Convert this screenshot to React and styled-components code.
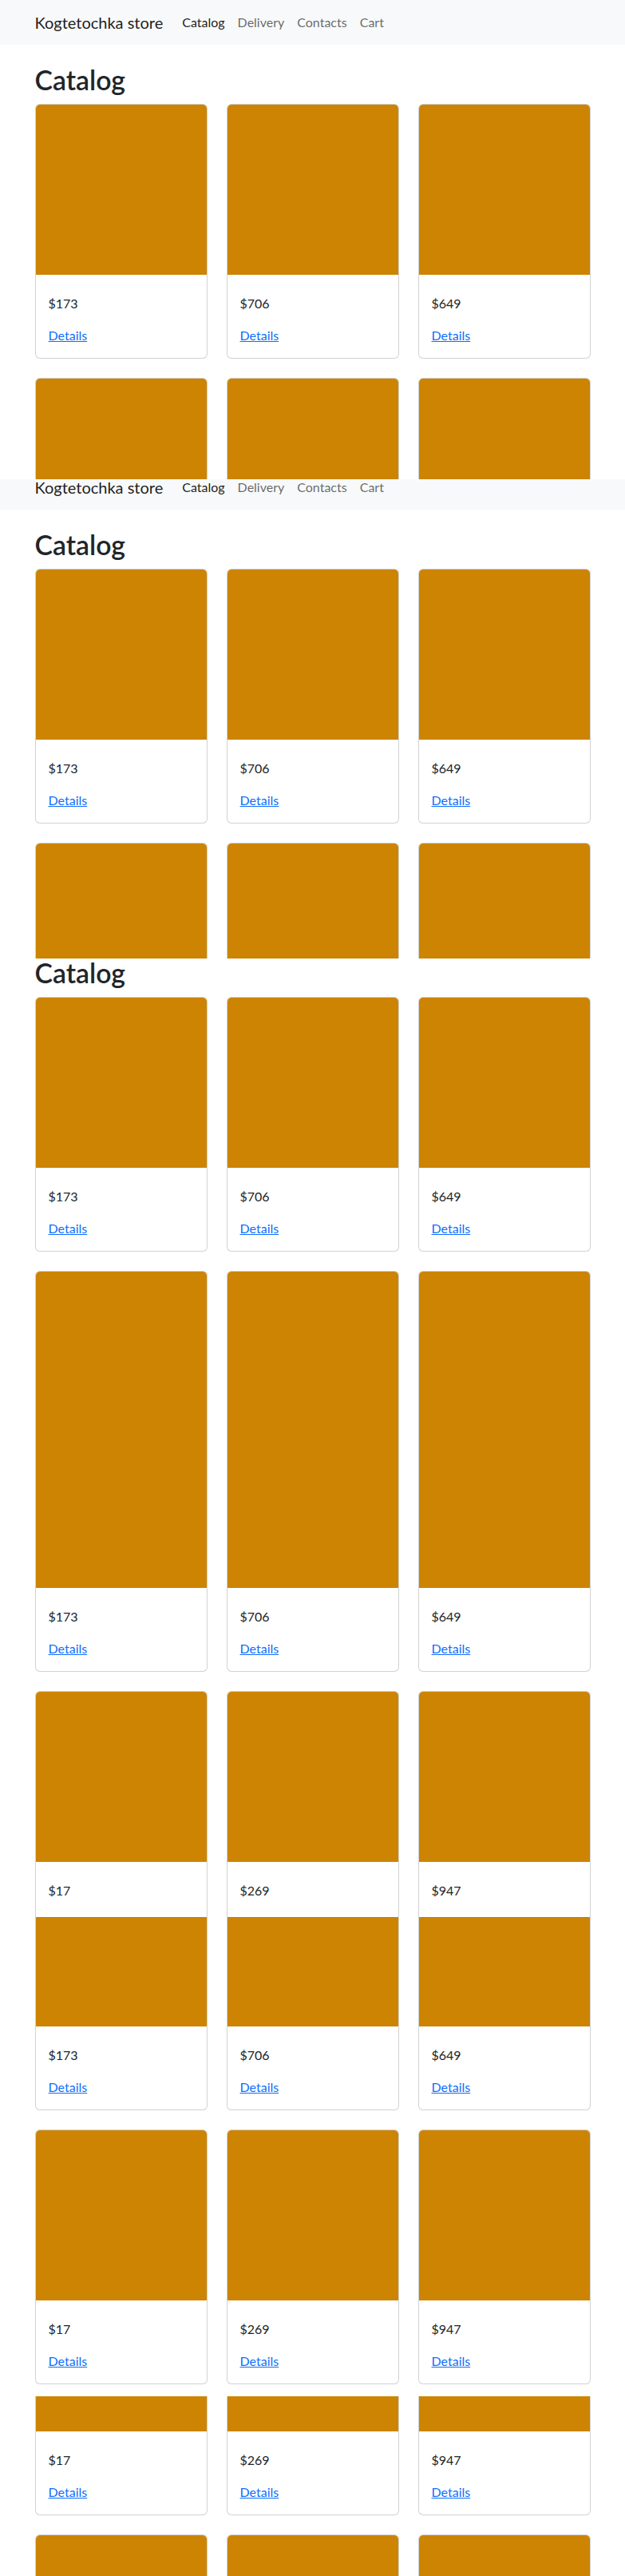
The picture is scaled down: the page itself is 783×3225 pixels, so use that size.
import styled, { createGlobalStyle } from "styled-components";

const GlobalStyle = createGlobalStyle`
  * {
    box-sizing: border-box;
  }

  body {
    margin: 0;
    background: #ffffff;
    color: #212529;
    font-family: "Segoe UI", Lato, "Liberation Sans", sans-serif;
    font-size: 16px;
    line-height: 1.5;
  }
`;

// the capture is several scroll positions of the same page stitched together,
// each slice shows the page from `from` and only needs the first `items` cards
const slices = [
  { from: 0, height: 600, items: 6 },
  { from: 18, height: 600, items: 6 },
  { from: 82, height: 590, items: 6 },
  { from: 146, height: 610, items: 6 },
  { from: 207, height: 600, items: 6 },
  { from: 643, height: 225, items: 9 },
];

const products = [
  { id: 1, price: 173 },
  { id: 2, price: 706 },
  { id: 3, price: 649 },
  { id: 4, price: 17 },
  { id: 5, price: 269 },
  { id: 6, price: 947 },
  { id: 7, price: 512 },
  { id: 8, price: 88 },
  { id: 9, price: 334 },
];

const navItems = ["Catalog", "Delivery", "Contacts", "Cart"];

function StorePage({ items }) {
  return (
    <>
      <Navbar>
        <NavContainer>
          <Brand href="#">Kogtetochka store</Brand>
          <NavList>
            {navItems.map((item) => (
              <NavLink key={item} href="#" $active={item === "Catalog"}>
                {item}
              </NavLink>
            ))}
          </NavList>
        </NavContainer>
      </Navbar>

      <Main>
        <Title>Catalog</Title>
        <Grid>
          {products.slice(0, items).map((product) => (
            <Card key={product.id}>
              <CardImage />
              <CardBody>
                <Price>${product.price}</Price>
                <DetailsLink href="#">Details</DetailsLink>
              </CardBody>
            </Card>
          ))}
        </Grid>
      </Main>
    </>
  );
}

export default function App() {
  return (
    <>
      <GlobalStyle />
      <Capture>
        {slices.map((slice, index) => (
          <Slice key={index} $height={slice.height}>
            <Scrolled $from={slice.from}>
              <StorePage items={slice.items} />
            </Scrolled>
          </Slice>
        ))}
      </Capture>
    </>
  );
}

const Capture = styled.div`
  width: 100%;
`;

const Slice = styled.div`
  height: ${(props) => props.$height}px;
  overflow: hidden;
`;

const Scrolled = styled.div`
  margin-top: -${(props) => props.$from}px;
`;

const Navbar = styled.nav`
  background: #f8f9fa;
  padding: 8px 0;
`;

const NavContainer = styled.div`
  width: 720px;
  margin: 0 auto;
  padding: 0 12px;
  display: flex;
  align-items: center;
`;

const Brand = styled.a`
  padding: 5px 0;
  margin-right: 16px;
  font-size: 20px;
  line-height: 30px;
  color: rgba(0, 0, 0, 0.9);
  text-decoration: none;
  white-space: nowrap;
`;

const NavList = styled.div`
  display: flex;
`;

const NavLink = styled.a`
  padding: 8px;
  font-size: 16px;
  line-height: 24px;
  color: ${(props) =>
    props.$active ? "rgba(0, 0, 0, 0.9)" : "rgba(0, 0, 0, 0.6)"};
  text-decoration: none;
`;

const Main = styled.main`
  width: 720px;
  margin: 24px auto 0;
  padding: 0 12px;
`;

const Title = styled.h1`
  margin: 0 0 10px;
  font-size: 33.75px;
  font-weight: 600;
  line-height: 40px;
  color: #212529;
`;

const Grid = styled.div`
  display: grid;
  grid-template-columns: repeat(3, 216px);
  column-gap: 24px;
`;

const Card = styled.div`
  margin-bottom: 24px;
  border: 1px solid rgba(0, 0, 0, 0.175);
  border-radius: 6px;
  overflow: hidden;
  background: #ffffff;
`;

const CardImage = styled.div`
  height: 213px;
  background: #cc8402;
`;

const CardBody = styled.div`
  padding: 24px 16px 16px;
`;

const Price = styled.p`
  margin: 0 0 16px;
  line-height: 24px;
  color: #212529;
`;

const DetailsLink = styled.a`
  display: inline-block;
  line-height: 24px;
  color: #0d6efd;
  text-decoration: underline;
`;
